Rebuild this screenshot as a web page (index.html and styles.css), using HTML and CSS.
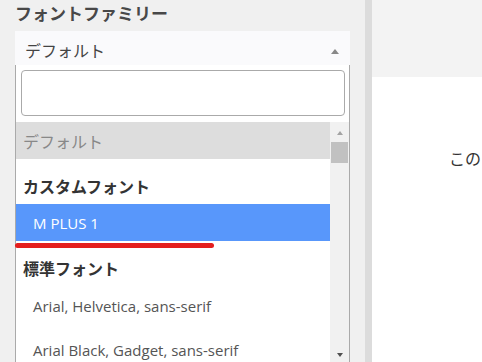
FILE: index.html
```html
<!DOCTYPE html>
<html lang="ja">
<head>
<meta charset="utf-8">
<link rel="stylesheet" href="styles.css">
</head>
<body>
<div class="page">
  <div class="left">
    <div class="label">フォントファミリー</div>
    <div class="select">
      <span class="select-text">デフォルト</span>
      <span class="select-arrow"></span>
    </div>
    <div class="dropdown">
      <div class="search-wrap"><div class="search"></div></div>
      <div class="list">
        <div class="options">
          <div class="opt opt-default">デフォルト</div>
          <div class="group">カスタムフォント</div>
          <div class="opt opt-sub opt-selected">M PLUS 1</div>
          <div class="group">標準フォント</div>
          <div class="opt opt-sub opt-plain">Arial, Helvetica, sans-serif</div>
          <div class="opt opt-sub opt-plain">Arial Black, Gadget, sans-serif</div>
        </div>
        <div class="scrollbar">
          <div class="sb-up"></div>
          <div class="sb-thumb"></div>
          <div class="sb-track"></div>
          <div class="sb-down"></div>
        </div>
      </div>
    </div>
    <div class="mark"></div>
  </div>
  <div class="divider"></div>
  <div class="right">
    <div class="right-top"></div>
    <div class="right-body"><span class="preview">この</span></div>
  </div>
</div>
</body>
</html>
```
FILE: styles.css
```css
html, body {
  margin: 0;
  padding: 0;
  height: 100%;
  overflow: hidden;
}
body {
  background: #f0f0f0;
  font-family: "Open Sans", "Noto Sans CJK JP", sans-serif;
  color: #444;
}
.page {
  display: flex;
  height: 362px;
}
.left {
  position: relative;
  width: 365px;
  flex: none;
  padding-left: 15px;
  box-sizing: border-box;
}
.label {
  height: 31px;
  box-sizing: border-box;
  padding-top: 2px;
  font-size: 17px;
  line-height: 24px;
  font-weight: bold;
  color: #484848;
}
.select {
  width: 335px;
  height: 34px;
  background: #fafafc;
  display: flex;
  align-items: center;
  justify-content: space-between;
  box-sizing: border-box;
  padding: 4px 11px 0 10px;
}
.select-text {
  font-size: 16px;
  color: #444;
}
.select-arrow {
  width: 0;
  height: 0;
  border-left: 4px solid transparent;
  border-right: 4px solid transparent;
  border-bottom: 5px solid #888;
  margin-top: 2px;
}
.dropdown {
  width: 335px;
  background: #fff;
  border-left: 1px solid #aaa;
  border-right: 1px solid #aaa;
  box-sizing: border-box;
}
.search-wrap {
  padding: 5px 4px 6px 5px;
}
.search {
  height: 46px;
  box-sizing: border-box;
  border: 1px solid #aaa;
  border-radius: 4px;
  background: #fff;
}
.list {
  display: flex;
}
.options {
  flex: 1;
  min-width: 0;
}
.opt, .group {
  display: flex;
  align-items: center;
  box-sizing: border-box;
  font-size: 15px;
  white-space: nowrap;
}
.opt-default {
  height: 37px;
  background: #dddddd;
  color: #888;
  padding-left: 7px;
  font-size: 16px;
}
.group {
  height: 45px;
  padding: 9px 0 0 7px;
  font-weight: bold;
  font-size: 16px;
  color: #333;
}
.opt-sub {
  padding-left: 17px;
}
.opt-selected {
  height: 37px;
  background: #5897fb;
  color: #fff;
}
.opt-plain {
  height: 40px;
  color: #555;
  line-height: 20px;
}
.opt-plain + .opt-plain {
  height: 48px;
}
.scrollbar {
  width: 19px;
  flex: none;
  background: #f1f1f1;
  display: flex;
  flex-direction: column;
  align-items: center;
  height: 240px;
}
.sb-up {
  margin-top: 9px;
  width: 0;
  height: 0;
  border-left: 3.5px solid transparent;
  border-right: 3.5px solid transparent;
  border-bottom: 4px solid #a3a3a3;
}
.sb-thumb {
  margin-top: 7px;
  width: 17px;
  height: 21px;
  background: #c1c1c1;
}
.sb-track {
  flex: 1;
}
.sb-down {
  margin-bottom: 5px;
  width: 0;
  height: 0;
  border-left: 3.5px solid transparent;
  border-right: 3.5px solid transparent;
  border-top: 4px solid #505050;
}
.mark {
  position: absolute;
  left: 15px;
  top: 243px;
  width: 199px;
  height: 5px;
  border-radius: 3px;
  background: #e41e1e;
}
.divider {
  width: 7px;
  flex: none;
  background: #dcdcdc;
}
.right {
  flex: 1;
  min-width: 0;
  display: flex;
  flex-direction: column;
  background: #fff;
}
.right-top {
  height: 77px;
  background: #f3f3f3;
}
.right-body {
  padding: 69px 0 0 77px;
  overflow: hidden;
  white-space: nowrap;
}
.preview {
  font-size: 16px;
  color: #333;
}
```
